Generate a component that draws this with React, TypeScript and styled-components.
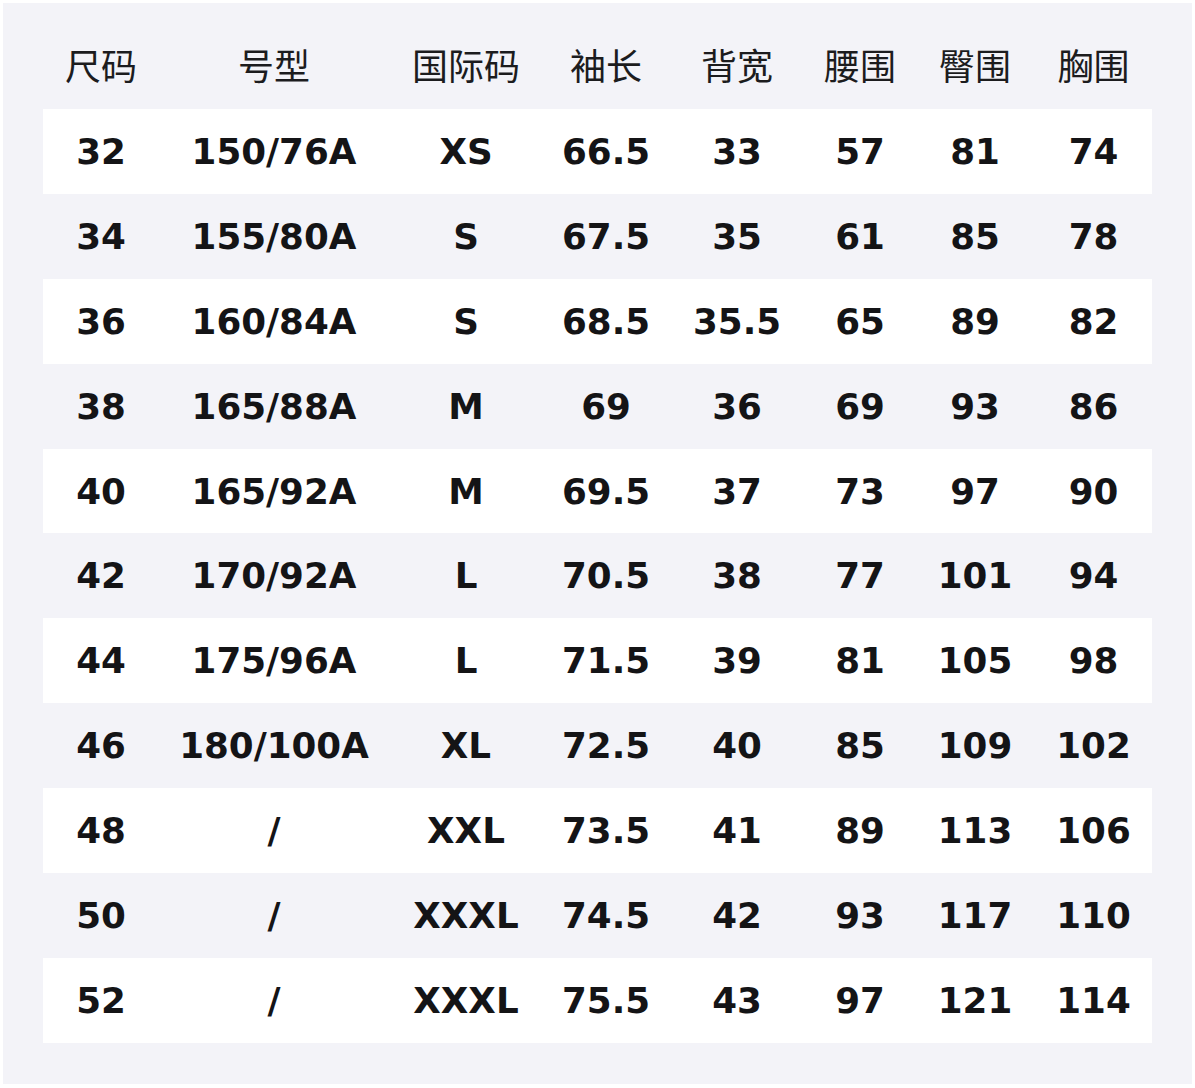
import React from 'react';
import styled, { createGlobalStyle } from 'styled-components';

const GlobalStyle = createGlobalStyle`
  body {
    margin: 3px;
    background: #ffffff;
  }
`;

const Panel = styled.div`
  width: 1189px;
  height: 1081px;
  box-sizing: border-box;
  padding: 22px 40px 41px;
  background-color: #f3f3f8;
`;

const Grid = styled.div`
  display: grid;
  grid-template-columns: 116px 230px 154px 126px 136px 110px 120px 117px;
`;

const Row = styled.div<{ $striped?: boolean }>`
  display: contents;
  & > div {
    background-color: ${(p) => (p.$striped ? '#ffffff' : 'transparent')};
  }
`;

const HeadCell = styled.div`
  height: 84px;
  box-sizing: border-box;
  padding-bottom: 6px;
  display: flex;
  align-items: center;
  justify-content: center;
  font-family: 'Noto Sans CJK SC', 'Noto Sans', sans-serif;
  font-size: 36px;
  font-weight: 400;
  line-height: 1;
  color: #1c1c1e;
`;

const Cell = styled.div`
  height: 84.9px;
  display: flex;
  align-items: center;
  justify-content: center;
  font-family: 'DejaVu Sans', 'Noto Sans CJK SC', sans-serif;
  font-size: 35.7px;
  font-weight: 700;
  color: #141416;
  white-space: nowrap;
`;

const headers = ['尺码', '号型', '国际码', '袖长', '背宽', '腰围', '臀围', '胸围'];

const rows: string[][] = [
  ['32', '150/76A', 'XS', '66.5', '33', '57', '81', '74'],
  ['34', '155/80A', 'S', '67.5', '35', '61', '85', '78'],
  ['36', '160/84A', 'S', '68.5', '35.5', '65', '89', '82'],
  ['38', '165/88A', 'M', '69', '36', '69', '93', '86'],
  ['40', '165/92A', 'M', '69.5', '37', '73', '97', '90'],
  ['42', '170/92A', 'L', '70.5', '38', '77', '101', '94'],
  ['44', '175/96A', 'L', '71.5', '39', '81', '105', '98'],
  ['46', '180/100A', 'XL', '72.5', '40', '85', '109', '102'],
  ['48', '/', 'XXL', '73.5', '41', '89', '113', '106'],
  ['50', '/', 'XXXL', '74.5', '42', '93', '117', '110'],
  ['52', '/', 'XXXL', '75.5', '43', '97', '121', '114'],
];

export default function App() {
  return (
    <>
      <GlobalStyle />
      <Panel>
        <Grid>
          {headers.map((h) => (
            <HeadCell key={h}>{h}</HeadCell>
          ))}
          {rows.map((r, i) => (
            <Row key={i} $striped={i % 2 === 0}>
              {r.map((v, j) => (
                <Cell key={j}>{v}</Cell>
              ))}
            </Row>
          ))}
        </Grid>
      </Panel>
    </>
  );
}
